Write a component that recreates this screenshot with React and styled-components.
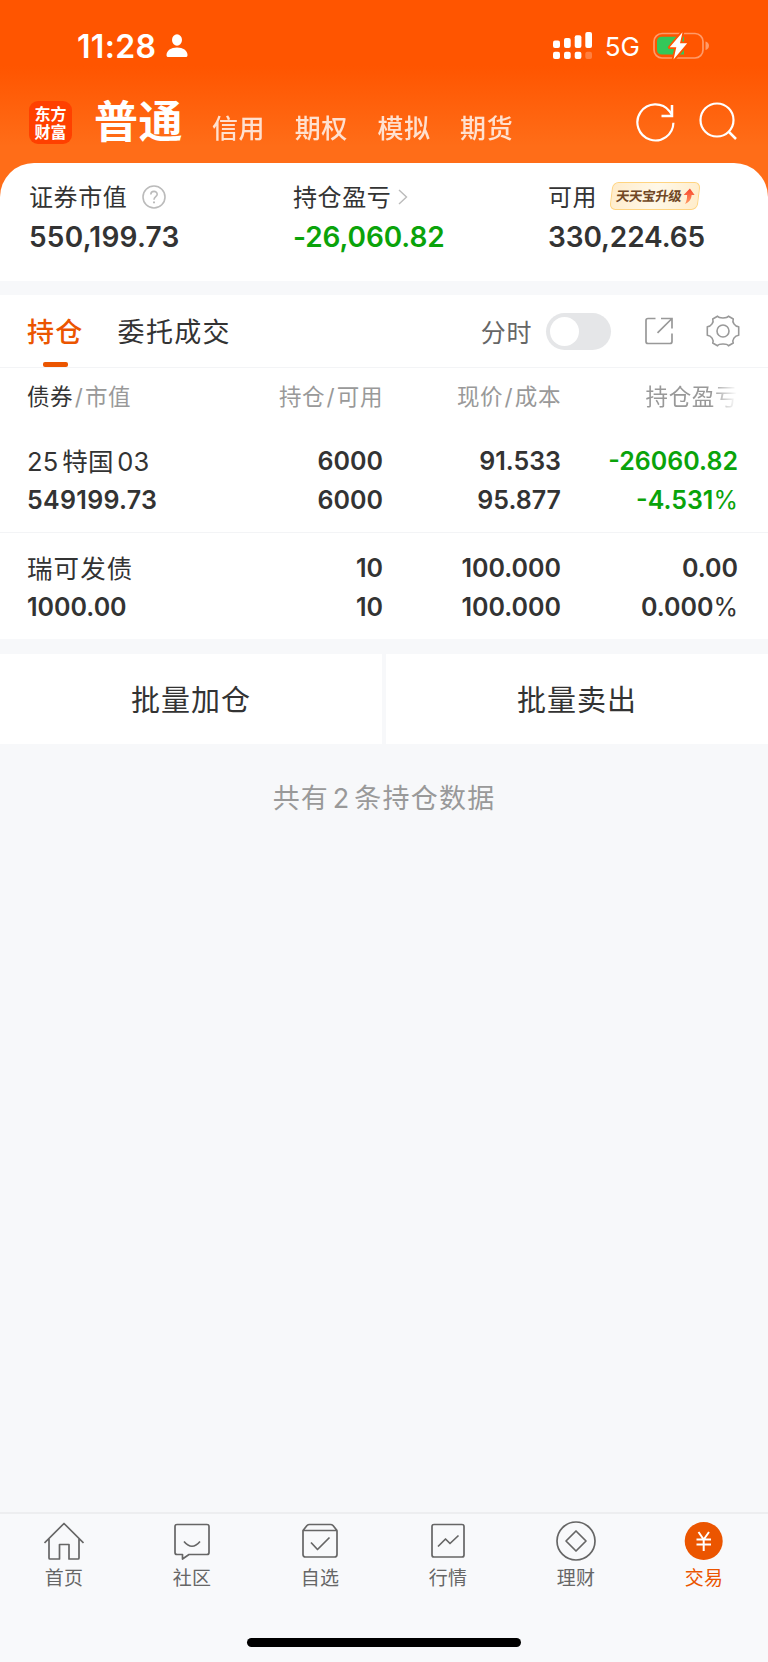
import React from "react"
import styled, { createGlobalStyle } from "styled-components"

const GlobalStyle = createGlobalStyle`
    * {
        box-sizing: border-box;
    }

    body {
        margin: 0;
        background: #f7f8fa;
        color: #333;
        font-family: Inter, "Noto Sans CJK SC", sans-serif;
        -webkit-font-smoothing: antialiased;
    }
`

const Screen = styled.div`
    display: flex;
    flex-direction: column;
    width: 768px;
    height: 1662px;
    overflow: hidden;
    white-space: nowrap;
`

const Header = styled.header`
    height: 198px;
    flex: none;
    background: linear-gradient(#ff5500 0, #ff5500 66px, #ff6d18 146px, #ff6d18 100%);
`

const StatusBar = styled.div`
    display: flex;
    align-items: center;
    height: 92px;
    padding: 0 58px 0 77px;
    color: #fff;
`

const Time = styled.span`
    font-size: 32px;
    font-weight: 600;
    line-height: 40px;
    letter-spacing: 0.3px;
    margin: 2px 10px 0 0;
`

const Network = styled.span`
    font-size: 26px;
    line-height: 32px;
    margin: 2px 13px 0 12px;
`

const Grow = styled.div`
    flex: 1;
`

const NavBar = styled.nav`
    display: flex;
    height: 72px;
    padding: 0 30px 0 29px;
    color: #fff;
`

const Logo = styled.div`
    display: flex;
    flex-direction: column;
    align-items: center;
    justify-content: center;
    width: 43px;
    height: 43px;
    margin: 9px 22px 0 0;
    border-radius: 9px;
    background: #ff4000;
    font-size: 16px;
    font-weight: 700;
    line-height: 18px;
`

const Account = styled.span`
    width: ${p => (p.$active ? "118px" : "82.7px")};
    margin-top: ${p => (p.$active ? "0" : "7px")};
    font-size: ${p => (p.$active ? "44px" : "26px")};
    font-weight: ${p => (p.$active ? 700 : 500)};
    line-height: 60px;
    letter-spacing: 0.6px;
    opacity: ${p => (p.$active ? 1 : 0.8)};
`

const NavIcons = styled.div`
    display: flex;
    gap: 22px;
    margin-top: 9px;
`

const Summary = styled.section`
    display: grid;
    grid-template-columns: 264px 255px 1fr;
    flex: none;
    height: 118px;
    margin-top: -35px;
    padding: 16px 0 0 29px;
    border-radius: 34px 34px 0 0;
    background: #fff;
`

const Label = styled.div`
    display: flex;
    align-items: center;
    height: 36px;
    font-size: 24px;
    line-height: 32px;
    letter-spacing: 0.6px;

    svg {
        margin-left: ${p => p.$gap || "0"};
    }
`

const LabelText = styled.span`
    margin-top: 1px;
`

const Amount = styled.div`
    margin-top: 4px;
    font-size: 28px;
    font-weight: 600;
    line-height: 37px;
    letter-spacing: ${p => p.$spacing || "-0.1px"};
    color: ${p => (p.$down ? "#0aa30a" : "#333")};
`

const Badge = styled.span`
    display: flex;
    align-items: center;
    width: 88px;
    height: 28px;
    margin: -2px 0 0 14px;
    padding-left: 4px;
    border: 1.5px solid #ffd480;
    border-radius: 6px;
    background: linear-gradient(100deg, #ffeccb, #fff8e8 50%, #ffedcb);
    transform: skewX(-7deg);
    color: #704725;
    font-size: 13.5px;
    font-weight: 700;
    letter-spacing: -0.4px;

    svg {
        margin-left: 1px;
    }
`

const Toolbar = styled.div`
    display: flex;
    flex: none;
    height: 73px;
    margin-top: 14px;
    padding: 0 28px 0 27px;
    background: #fff;
    border-bottom: 1px solid #f3f4f6;
`

const Tab = styled.div`
    display: flex;
    flex-direction: column;
    align-items: center;
    justify-content: space-between;
    margin-right: 34px;
    padding-top: 20px;
    color: ${p => (p.$active ? "#eb5500" : "#333")};
    font-size: 27px;
    font-weight: ${p => (p.$active ? 500 : 400)};
    line-height: 36px;
    letter-spacing: 1.3px;

    &::after {
        content: "";
        width: 25px;
        height: 5px;
        border-radius: 2px;
        background: ${p => (p.$active ? "#eb5500" : "transparent")};
    }
`

const Tools = styled.div`
    display: flex;
    align-items: center;
    height: 72px;
    color: #666;
    font-size: 25px;
    letter-spacing: 0.6px;
`

const Toggle = styled.div`
    width: 65px;
    height: 37px;
    margin: 0 34px 0 14px;
    padding: 4px;
    border-radius: 19px;
    background: #e5e6e8;

    &::after {
        content: "";
        display: block;
        width: 29px;
        height: 29px;
        border-radius: 50%;
        background: #fff;
    }
`

const ToolGap = styled.div`
    width: 33px;
`

const Row = styled.div`
    display: grid;
    grid-template-columns: 176px 180px 178px 177px;
    flex: none;
    height: ${p => p.$height};
    padding: ${p => p.$top} 30px 0 27px;
    background: #fff;
    border-bottom: 1px solid ${p => (p.$line ? "#f3f4f6" : "#fff")};
`

const HeadCell = styled.div`
    color: #999;
    font-size: 22.5px;
    line-height: 33px;
    letter-spacing: 0.6px;
    text-align: ${p => (p.$left ? "left" : "right")};

    b {
        color: #333;
        font-weight: 400;
    }

    i {
        font-style: normal;
        padding: 0 1.5px;
    }
`

const FadedCell = styled(HeadCell)`
    mask-image: linear-gradient(90deg, #000 150px, transparent 176px);
`

const Cell = styled.div`
    display: flex;
    flex-direction: column;
    color: ${p => (p.$down ? "#0aa30a" : "#333")};
    font-size: 25px;
    font-weight: 600;
    line-height: 39px;
    text-align: ${p => (p.$left ? "left" : "right")};

    span {
        height: 39px;
    }

    em {
        font-style: normal;
        font-weight: 400;
        font-size: 25px;
    }
`

const Name = styled.span`
    font-size: 25.5px;
    font-weight: 400;
    letter-spacing: ${p => p.$spacing};
    word-spacing: -4px;
`

const MarketValue = styled.span`
    letter-spacing: ${p => p.$spacing};
`

const Actions = styled.div`
    display: grid;
    grid-template-columns: 1fr 1fr;
    gap: 4px;
    flex: none;
    margin-top: 15px;
`

const Action = styled.button`
    height: 90px;
    padding: 0 0 2px;
    border: 0;
    background: #fff;
    color: #333;
    font-family: inherit;
    font-size: 29px;
    letter-spacing: 1px;
`

const Count = styled.p`
    flex: 1;
    margin: 32px 0 0;
    color: #999;
    font-size: 27px;
    line-height: 45px;
    letter-spacing: 1.2px;
    word-spacing: -5px;
    text-align: center;
`

const BottomBar = styled.footer`
    flex: none;
    height: 150px;
    border-top: 2px solid #edeef0;
    background: #f8f9fb;
`

const BottomTabs = styled.div`
    display: grid;
    grid-template-columns: repeat(6, 128px);
    height: 124px;
`

const BottomTab = styled.div`
    display: flex;
    flex-direction: column;
    align-items: center;
    padding-top: 7px;
    color: ${p => (p.$active ? "#eb5500" : "#666")};
    font-size: 19px;
    line-height: 28px;
    letter-spacing: 0.3px;

    svg {
        margin-bottom: 4px;
    }
`

const HomeIndicator = styled.div`
    width: 274px;
    height: 9px;
    margin: 0 auto;
    border-radius: 5px;
    background: #000;
`

const accounts = ["信用", "期权", "模拟", "期货"]

const holdings = [
    {
        name: "25 特国 03",
        nameSpacing: "0.3px",
        value: "549199.73",
        valueSpacing: "0.3px",
        amount: ["6000", "6000"],
        price: ["91.533", "95.877"],
        profit: "-26060.82",
        rate: "-4.531",
        down: true
    },
    {
        name: "瑞可发债",
        nameSpacing: "1.1px",
        value: "1000.00",
        valueSpacing: "0",
        amount: ["10", "10"],
        price: ["100.000", "100.000"],
        profit: "0.00",
        rate: "0.000",
        down: false
    }
]

const PersonIcon = () => (
    <svg width="22" height="24" viewBox="0 0 22 24" fill="#fff">
        <ellipse cx="11" cy="6" rx="5" ry="5.7" />
        <path d="M0.5 21C0.5 16.500 5 13.500 11 13.500S21.500 16.500 21.500 21C21.500 22.500 21 23 19.500 23H2.500C1 23 0.500 22.500 0.500 21Z" />
    </svg>
)

const SignalIcon = () => (
    <svg width="40" height="28" viewBox="0 0 40 28" fill="#fff">
        <rect x="0" y="8.500" width="7" height="7.500" rx="2" />
        <rect x="11" y="6" width="6.700" height="10" rx="2" />
        <rect x="21.700" y="3.200" width="6.700" height="12.800" rx="2" />
        <rect x="32.300" y="0" width="6.700" height="16" rx="2" />
        <rect x="0" y="19.700" width="7" height="7.300" rx="2" />
        <rect x="11" y="19.700" width="6.700" height="7.300" rx="2" />
        <rect x="21.700" y="19.700" width="6.700" height="7.300" rx="2" />
        <rect x="32.300" y="19.700" width="6.700" height="7.300" rx="2" opacity="0.25" />
    </svg>
)

const BatteryIcon = () => (
    <svg width="57" height="30" viewBox="0 0 57 30">
        <rect x="1" y="2.500" width="49" height="24.500" rx="8" fill="none" stroke="#ff9b69" strokeWidth="1.700" />
        <path d="M52.500 10.500C54.500 11 56 12.500 56 14.700S54.500 18.500 52.500 19Z" fill="#ff9b69" />
        <path d="M9 5.700H31V23.500H9Q4 23.500 4 18.500V10.500Q4 5.700 9 5.700Z" fill="#34c759" />
        <path d="M29.500 1.200L16.700 16.300H23.300L20.500 28.500L34.200 12.300H27Z" fill="#fff" stroke="#ff5500" strokeWidth="3.500" paintOrder="stroke" strokeLinejoin="round" />
    </svg>
)

const RefreshIcon = () => (
    <svg width="40" height="42" viewBox="0 0 40 42" fill="none" stroke="#fff" strokeWidth="2.200">
        <path d="M37.400 21.700A18 18 0 1 1 33.500 10.200L36 14" />
        <path d="M36 4V15H25.500" strokeWidth="2.500" />
    </svg>
)

const SearchIcon = () => (
    <svg width="40" height="42" viewBox="0 0 40 42" fill="none" stroke="#fff" strokeWidth="2.200">
        <circle cx="19" cy="19" r="16.500" />
        <path d="M30.500 30.500L38 38" strokeWidth="2.500" />
    </svg>
)

const HelpIcon = () => (
    <svg width="24" height="24" viewBox="0 0 24 24" fill="none" stroke="#bbb" strokeWidth="1.600">
        <circle cx="12" cy="12" r="11" />
        <path d="M8.800 9.500C8.800 5.400 15.200 5.400 15.200 9.200C15.200 11.700 12 11.600 12 14.700" />
        <path d="M12 16.400V18.200" strokeWidth="2" />
    </svg>
)

const ChevronIcon = () => (
    <svg width="10" height="16" viewBox="0 0 10 16" fill="none" stroke="#bbb" strokeWidth="1.400">
        <path d="M1 1L8.500 8L1 15" />
    </svg>
)

const UpIcon = () => (
    <svg width="12" height="17" viewBox="0 0 12 17">
        <defs>
            <linearGradient id="up" x1="0" y1="0" x2="0" y2="1">
                <stop offset="0" stopColor="#f8432c" />
                <stop offset="1" stopColor="#ff9a62" />
            </linearGradient>
        </defs>
        <path d="M6 0.500L11.500 7H8.500C8.700 11 7 14.500 3 16C4.500 13 4.300 10 4 7H0.500Z" fill="url(#up)" />
    </svg>
)

const ShareIcon = () => (
    <svg width="28" height="28" viewBox="0 0 28 28" fill="none" stroke="#999" strokeWidth="1.700">
        <path d="M10.500 1.500H3Q1 1.500 1 3.500V24.500Q1 26.500 3 26.500H25Q27 26.500 27 24.500V16.500" />
        <path d="M16 1.500H27V11.500M27 1.500L12.500 15.800" />
    </svg>
)

const GearIcon = () => (
    <svg width="34" height="34" viewBox="0 0 34 34" fill="none" stroke="#999" strokeWidth="1.600" strokeLinejoin="round">
        <circle cx="17" cy="17" r="6" />
        <path d="M11.500 2.200C13 4.600 21 4.600 22.500 2.200L27.300 5C26 8 28.500 12.300 32.700 12.800V21.200C28.500 21.700 26 26 27.300 29L22.500 31.800C21 29.400 13 29.400 11.500 31.800L6.700 29C8 26 5.500 21.700 1.300 21.200V12.800C5.500 12.300 8 8 6.700 5Z" />
    </svg>
)

const TabIcon = ({ children }) => (
    <svg width="40" height="40" viewBox="0 0 40 40" fill="none" stroke="#666" strokeWidth="1.700" strokeLinejoin="round">
        {children}
    </svg>
)

const bottomTabs = [
    {
        label: "首页",
        icon: <path d="M0.500 22L20 2.500L39.500 22M5 18V37Q5 38 6 38H15.500V23.500H25V38H34Q35 38 35 37V18" />
    },
    {
        label: "社区",
        icon: (
            <>
                <path d="M5 3.500H35Q37 3.500 37 5.500V31.500Q37 33.500 35 33.500H17L10.500 38V33.500H5Q3 33.500 3 31.500V5.500Q3 3.500 5 3.500Z" />
                <path d="M12 20.500Q20 30 28 20.500" />
            </>
        )
    },
    {
        label: "自选",
        icon: (
            <>
                <path d="M3 9.500H37V33.500Q37 36 34.500 36H5.500Q3 36 3 33.500V9.500L7 4.500Q8 3.500 9.500 3.500H30.500Q32 3.500 33 4.500L37 9.500" />
                <path d="M11 21.500L17.500 28.500L29.500 16.500" />
            </>
        )
    },
    {
        label: "行情",
        icon: (
            <>
                <rect x="4" y="3.500" width="32" height="32.500" rx="2" />
                <path d="M10 25.500L17.500 18L22 22.500L30.500 14.500" />
            </>
        )
    },
    {
        label: "理财",
        icon: (
            <>
                <circle cx="20" cy="20" r="19" />
                <path d="M20 10L30 20L20 30L10 20Z" />
            </>
        )
    },
    {
        label: "交易",
        active: true,
        icon: (
            <>
                <circle cx="19.700" cy="20" r="19" fill="#eb5500" stroke="none" />
                <path d="M14.500 11L19.700 18.500L25 11M19.700 18.500V30M12.500 18.500H27M12.500 23.500H27" stroke="#fff" strokeWidth="2" />
            </>
        )
    }
]

const Holding = ({ item }) => (
    <Row $height={item.down ? "107px" : "106px"} $top="16px" $line={item.down}>
        <Cell $left>
            <Name $spacing={item.nameSpacing}>{item.name}</Name>
            <MarketValue $spacing={item.valueSpacing}>{item.value}</MarketValue>
        </Cell>
        <Cell>
            {item.amount.map((v, i) => <span key={i}>{v}</span>)}
        </Cell>
        <Cell>
            {item.price.map((v, i) => <span key={i}>{v}</span>)}
        </Cell>
        <Cell $down={item.down}>
            <span>{item.profit}</span>
            <span>{item.rate}<em>%</em></span>
        </Cell>
    </Row>
)

const App = () => (
    <Screen>
        <GlobalStyle />

        <Header>
            <StatusBar>
                <Time>11:28</Time>
                <PersonIcon />
                <Grow />
                <SignalIcon />
                <Network>5G</Network>
                <BatteryIcon />
            </StatusBar>
            <NavBar>
                <Logo>
                    <span>东方</span>
                    <span>财富</span>
                </Logo>
                <Account $active>普通</Account>
                {accounts.map(a => <Account key={a}>{a}</Account>)}
                <Grow />
                <NavIcons>
                    <RefreshIcon />
                    <SearchIcon />
                </NavIcons>
            </NavBar>
        </Header>

        <Summary>
            <div>
                <Label $gap="15px"><LabelText>证券市值</LabelText><HelpIcon /></Label>
                <Amount $spacing="0.25px">550,199.73</Amount>
            </div>
            <div>
                <Label $gap="7px"><LabelText>持仓盈亏</LabelText><ChevronIcon /></Label>
                <Amount $down>-26,060.82</Amount>
            </div>
            <div>
                <Label><LabelText>可用</LabelText><Badge>天天宝升级<UpIcon /></Badge></Label>
                <Amount>330,224.65</Amount>
            </div>
        </Summary>

        <Toolbar>
            <Tab $active>持仓</Tab>
            <Tab>委托成交</Tab>
            <Grow />
            <Tools>
                分时
                <Toggle />
                <ShareIcon />
                <ToolGap />
                <GearIcon />
            </Tools>
        </Toolbar>

        <Row $height="58px" $top="12px">
            <HeadCell $left><b>债券</b><i>/</i>市值</HeadCell>
            <HeadCell>持仓<i>/</i>可用</HeadCell>
            <HeadCell>现价<i>/</i>成本</HeadCell>
            <FadedCell>持仓盈亏</FadedCell>
        </Row>
        {holdings.map(h => <Holding key={h.name} item={h} />)}

        <Actions>
            <Action>批量加仓</Action>
            <Action>批量卖出</Action>
        </Actions>
        <Count>共有 2 条持仓数据</Count>

        <BottomBar>
            <BottomTabs>
                {bottomTabs.map(t => (
                    <BottomTab key={t.label} $active={t.active}>
                        <TabIcon>{t.icon}</TabIcon>
                        {t.label}
                    </BottomTab>
                ))}
            </BottomTabs>
            <HomeIndicator />
        </BottomBar>
    </Screen>
)

export default App
